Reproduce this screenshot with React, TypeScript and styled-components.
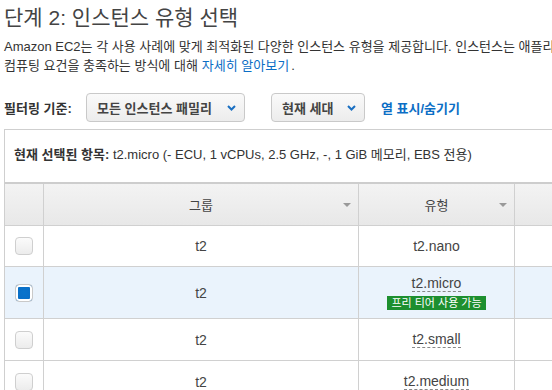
import React from "react";
import styled, { createGlobalStyle } from "styled-components";

const Global = createGlobalStyle`
  html, body { margin: 0; padding: 0; background: #fff; overflow: hidden; }
  body { font-family: "Liberation Sans", "Noto Sans CJK KR", sans-serif; color: #333; }
`;

const Page = styled.div`
  width: 552px;
  height: 390px;
  overflow: hidden;
  padding-left: 4px;
  box-sizing: border-box;
`;

const Title = styled.h1`
  margin: 0;
  padding-top: 3px;
  font-size: 21px;
  font-weight: normal;
  line-height: 30px;
  color: #444;
  white-space: nowrap;
`;

const Desc = styled.p`
  margin: 4px 0 0;
  font-size: 13px;
  line-height: 19px;
  color: #333;
  white-space: nowrap;
`;

const Link = styled.a<{ $bold?: boolean }>`
  color: #0b6ec5;
  text-decoration: none;
  font-weight: ${(p) => (p.$bold ? "bold" : "normal")};
  margin: 0 ${(p) => (p.$bold ? "0" : "2px")} 0 4px;
`;

const FilterRow = styled.div`
  display: flex;
  align-items: center;
  margin-top: 18px;
  height: 29px;
  font-size: 13px;
`;

const FilterLabel = styled.span`
  font-weight: bold;
  color: #333;
  width: 82px;
`;

const Select = styled.div<{ $w: number; $gap?: number }>`
  display: flex;
  align-items: center;
  justify-content: space-between;
  box-sizing: border-box;
  width: ${(p) => p.$w}px;
  height: 29px;
  margin-right: ${(p) => p.$gap ?? 0}px;
  padding: 0 8px 0 10px;
  border: 1px solid #c9c9c9;
  border-radius: 4px;
  background: linear-gradient(#fafafa, #ececec);
  font-weight: bold;
  color: #444;
`;

const Chevron = () => (
  <svg width="9" height="6" viewBox="0 0 9 6">
    <path d="M1 1 L4.5 4.5 L8 1" fill="none" stroke="#1a6fc2" strokeWidth="2" />
  </svg>
);

const Panel = styled.div`
  margin-top: 7px;
  width: 700px;
  border-top: 1px solid #cfcfcf;
  border-left: 1px solid #cfcfcf;
`;

const Selected = styled.div`
  height: 52px;
  padding: 14px 0 0 9px;
  box-sizing: border-box;
  font-size: 13px;
  color: #333;
  white-space: nowrap;
  strong { font-weight: bold; }
`;

const Table = styled.div`
  border-top: 2px solid #cdcdcd;
`;

const Row = styled.div<{ $h: number; $sel?: boolean; $head?: boolean }>`
  display: grid;
  grid-template-columns: 38px 315px 156px 1fr;
  height: ${(p) => p.$h}px;
  border-bottom: 1px solid #d0d0d0;
  background: ${(p) =>
    p.$head ? "linear-gradient(#f3f3f3, #e8e8e8)" : p.$sel ? "#eaf3fc" : "#fff"};
  font-size: ${(p) => (p.$head ? "13px" : "14px")};
  color: #444;
`;

const Cell = styled.div`
  position: relative;
  display: flex;
  flex-direction: column;
  align-items: center;
  justify-content: center;
  border-left: 1px solid #d0d0d0;
  &:first-child { border-left: none; }
`;

const SortArrow = styled.span`
  position: absolute;
  right: 7px;
  top: 50%;
  margin-top: -2px;
  width: 0;
  height: 0;
  border-left: 4px solid transparent;
  border-right: 4px solid transparent;
  border-top: 4px solid #999;
`;

const Check = styled.span<{ $on?: boolean }>`
  box-sizing: border-box;
  width: 18px;
  height: 18px;
  border-radius: 4px;
  border: 1px solid ${(p) => (p.$on ? "#c9c9c9" : "#cfcfcf")};
  background: ${(p) =>
    p.$on
      ? "radial-gradient(circle, #0a74cc 0, #0a6cc4 100%)"
      : "linear-gradient(#fbfbfb, #ececec)"};
  box-shadow: ${(p) => (p.$on ? "inset 0 0 0 2px #fff" : "none")};
`;

const TypeName = styled.span`
  border-bottom: 1px dashed #888;
  line-height: 16px;
`;

const Badge = styled.span`
  margin-top: 4px;
  background: #1d8f2f;
  color: #fff;
  font-size: 11px;
  line-height: 14px;
  padding: 0 4px;
`;

const rows = [
  { type: "t2.nano", h: 40, sel: false, dashed: false },
  { type: "t2.micro", h: 51, sel: true, dashed: true, badge: true },
  { type: "t2.small", h: 41, sel: false, dashed: true },
  { type: "t2.medium", h: 41, sel: false, dashed: true },
];

export default function App() {
  return (
    <Page>
      <Global />
      <Title>단계 2: 인스턴스 유형 선택</Title>
      <Desc>
        Amazon EC2는 각 사용 사례에 맞게 최적화된 다양한 인스턴스 유형을 제공합니다. 인스턴스는 애플리케이션을 실행할 수 있는 가상 서버입니다.
        <br />
        컴퓨팅 요건을 충족하는 방식에 대해
        <Link href="#">자세히 알아보기</Link>.
      </Desc>
      <FilterRow>
        <FilterLabel>필터링 기준:</FilterLabel>
        <Select $w={159} $gap={26}>
          모든 인스턴스 패밀리 <Chevron />
        </Select>
        <Select $w={94} $gap={12}>
          현재 세대 <Chevron />
        </Select>
        <Link href="#" $bold>
          열 표시/숨기기
        </Link>
      </FilterRow>
      <Panel>
        <Selected>
          <strong>현재 선택된 항목:</strong> t2.micro (- ECU, 1 vCPUs, 2.5 GHz, -, 1 GiB 메모리, EBS 전용)
        </Selected>
        <Table>
          <Row $h={41} $head>
            <Cell />
            <Cell>
              그룹
              <SortArrow />
            </Cell>
            <Cell>
              유형
              <SortArrow />
            </Cell>
            <Cell />
          </Row>
          {rows.map((r) => (
            <Row key={r.type} $h={r.h} $sel={r.sel}>
              <Cell>
                <Check $on={r.sel} />
              </Cell>
              <Cell>t2</Cell>
              <Cell>
                {r.dashed ? <TypeName>{r.type}</TypeName> : <span>{r.type}</span>}
                {r.badge && <Badge>프리 티어 사용 가능</Badge>}
              </Cell>
              <Cell />
            </Row>
          ))}
        </Table>
      </Panel>
    </Page>
  );
}
